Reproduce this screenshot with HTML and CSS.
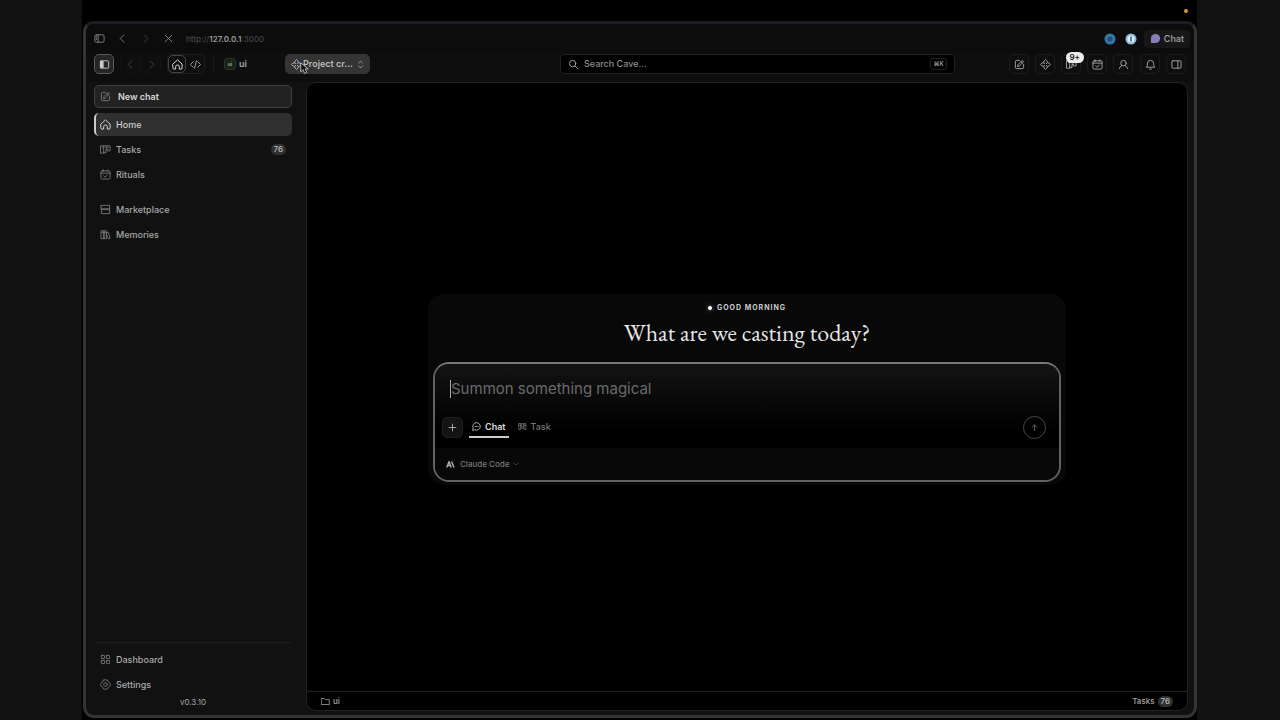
FILE: index.html
```
<!DOCTYPE html>
<html lang="en">
  <head>
    <title>Cave</title>
    <meta charset="UTF-8" />
    <meta name="viewport" content="width=device-width, initial-scale=1" />
    <link rel="stylesheet" href="styles.css">
  </head>
  <body>
    <!-- shared icons -->
    <svg class="defs" aria-hidden="true">
      <symbol id="panel-left" viewBox="0 0 24 24"><rect x="2" y="4" width="20" height="16" rx="3" /><path d="M9 4v16M5 8h1M5 11h1M5 14h1" /></symbol>
      <symbol id="panel-fill" viewBox="0 0 24 24"><rect x="3" y="4" width="18" height="16" rx="2" /><path d="M4 5h5v14H4z" fill="currentColor" /></symbol>
      <symbol id="panel-right" viewBox="0 0 24 24"><rect x="2" y="4" width="20" height="16" rx="2" /><path d="M15 4v16" /></symbol>
      <symbol id="left" viewBox="0 0 24 24"><path d="M15 4l-8 8 8 8" /></symbol>
      <symbol id="right" viewBox="0 0 24 24"><path d="M9 4l8 8-8 8" /></symbol>
      <symbol id="down" viewBox="0 0 24 24"><path d="M3 8l9 8 9-8" /></symbol>
      <symbol id="updown" viewBox="0 0 24 24"><path d="M7 8l5-5 5 5M7 16l5 5 5-5" /></symbol>
      <symbol id="close" viewBox="0 0 24 24"><path d="M5 5l14 14M19 5L5 19" /></symbol>
      <symbol id="home" viewBox="0 0 24 24"><path d="M2 11L12 2l10 9v9a2 2 0 0 1-2 2h-4v-5a4 4 0 0 0-8 0v5H4a2 2 0 0 1-2-2z" /></symbol>
      <symbol id="code" viewBox="0 0 24 24"><path d="M7 6l-6 6 6 6M17 6l6 6-6 6M14 4l-4 16" /></symbol>
      <symbol id="edit" viewBox="0 0 24 24"><path d="M12 3H6a3 3 0 0 0-3 3v12a3 3 0 0 0 3 3h12a3 3 0 0 0 3-3v-6" /><path d="M8 16l1-4 9-9 3 3-9 9zM15 6l3 3" /></symbol>
      <symbol id="sparkle" viewBox="0 0 24 24"><path d="M8 8l1-4 3-3 3 3 1 4 4 1 3 3-3 3-4 1-1 4-3 3-3-3-1-4-4-1-3-3 3-3zM8 8l2 2M16 8l-2 2M8 16l2-2M16 16l-2-2" /></symbol>
      <symbol id="board" viewBox="0 0 24 24"><path d="M2 4h20v11h-6v-3h-3v7H9v-2H8v3H2zM8 4v13M15 4v8M5 8h1M11 8h1M18 8h1" /></symbol>
      <symbol id="calendar" viewBox="0 0 24 24"><rect x="2" y="4" width="20" height="18" rx="3" /><path d="M2 9h20M7 2v3M17 2v3M8 15l3 3 5-5" /></symbol>
      <symbol id="store" viewBox="0 0 24 24"><path d="M3 3h18v8H3zM3 9c0 5 6 5 6 0 0 5 6 5 6 0 0 5 6 5 6 0M3 12v9h18v-9" /></symbol>
      <symbol id="books" viewBox="0 0 24 24"><path d="M3 4h6v17H3zM9 4h5v17H9zM14 8l4-1 4 13-4 1-4-9M3 8h6M9 8h5" /></symbol>
      <symbol id="grid" viewBox="0 0 24 24"><rect x="3" y="3" width="7" height="7" rx="1" /><rect x="14" y="3" width="7" height="7" rx="1" /><rect x="3" y="14" width="7" height="7" rx="1" /><rect x="14" y="14" width="7" height="7" rx="1" /></symbol>
      <symbol id="gear" viewBox="0 0 24 24"><path d="M8 2h8l2 4 3 2 2 4-2 4-3 2-2 4H8l-2-4-3-2-2-4 2-4 3-2z" /><circle cx="12" cy="12" r="4" /></symbol>
      <symbol id="user" viewBox="0 0 24 24"><circle cx="12" cy="9" r="6" /><path d="M3 21c1-4 3-5 5-6M21 21c-1-4-3-5-5-6" /></symbol>
      <symbol id="bell" viewBox="0 0 24 24"><path d="M5 10a7 7 0 0 1 14 0v4l2 4H3l2-4zM10 22h4" /></symbol>
      <symbol id="search" viewBox="0 0 24 24"><circle cx="10" cy="10" r="7" /><path d="M15 15l6 6" /></symbol>
      <symbol id="folder" viewBox="0 0 24 24"><path d="M2 4h7l3 3h10v13H2z" /></symbol>
      <symbol id="plus" viewBox="0 0 24 24"><path d="M12 3v18M3 12h18" /></symbol>
      <symbol id="up" viewBox="0 0 24 24"><path d="M12 20V5M6 11l6-6 6 6" /></symbol>
      <symbol id="bubble" viewBox="0 0 24 24"><path d="M2 22l1-6a10 10 0 1 1 5 5zM8 12h1M12 12h1M16 12h1" /></symbol>
      <symbol id="columns" viewBox="0 0 24 24"><path d="M3 4h4v16H3zM10 4h4v10h-4zM17 4h4v16h-4zM10 17h4M3 9h4M17 9h4" /></symbol>
    </svg>

    <div class="menubar"><span class="rec"></span></div>
    <div class="window">
      <header class="browser">
        <button class="plain" aria-label="Tabs"><svg class="icon"><use href="#panel-left" /></svg></button>
        <button class="plain" aria-label="Back"><svg class="icon"><use href="#left" /></svg></button>
        <button class="plain dim" aria-label="Forward"><svg class="icon"><use href="#right" /></svg></button>
        <button class="plain" aria-label="Stop"><svg class="icon"><use href="#close" /></svg></button>
        <span class="url">http://<b>127.0.0.1</b>:3000</span>
        <div class="exts">
          <svg class="ext" viewBox="0 0 12 12"><circle cx="6" cy="6" r="5.500" fill="#2f79a8" /><circle cx="6" cy="6" r="2.500" fill="#254f6b" /></svg>
          <svg class="ext" viewBox="0 0 12 12"><circle cx="6" cy="6" r="5.500" fill="#8fbbdc" /><circle cx="6" cy="6" r="3.500" fill="#e2edf5" /><path d="M6 3.500v5" stroke="#2c628e" stroke-width="1.500" /></svg>
          <button class="chat-ext"><svg viewBox="0 0 12 12"><path d="M1 11V6a5 5 0 1 1 5 5z" fill="#8a7cb4" /></svg>Chat</button>
        </div>
      </header>

      <nav class="toolbar" aria-label="Toolbar">
        <button class="tool toggle" aria-label="Sidebar"><svg class="icon"><use href="#panel-fill" /></svg></button>
        <div class="history">
          <button class="tool faint" aria-label="Back"><svg class="icon"><use href="#left" /></svg></button>
          <button class="tool faint" aria-label="Forward"><svg class="icon"><use href="#right" /></svg></button>
        </div>
        <div class="modes">
          <button class="mode on" aria-label="Home"><svg class="icon"><use href="#home" /></svg></button>
          <button class="mode" aria-label="Code"><svg class="icon"><use href="#code" /></svg></button>
        </div>
        <button class="workspace"><span class="avatar">ui</span>ui</button>
        <button class="project">
          <svg class="icon"><use href="#sparkle" /></svg><span>Project cr...</span><svg class="icon small"><use href="#updown" /></svg>
          <svg class="pointer" viewBox="0 0 12 17"><path d="M1 1v12l3-3 2 5 3-1-2-5h4z" fill="#111" stroke="#ddd" /></svg>
        </button>
        <label class="search">
          <svg class="icon"><use href="#search" /></svg>
          <input type="text" placeholder="Search Cave..." aria-label="Search Cave" />
          <kbd>⌘K</kbd>
        </label>
        <div class="actions">
          <button class="tool" aria-label="New chat"><svg class="icon"><use href="#edit" /></svg></button>
          <button class="tool" aria-label="Projects"><svg class="icon"><use href="#sparkle" /></svg></button>
          <button class="tool" aria-label="Tasks"><svg class="icon"><use href="#board" /></svg><span class="badge">9+</span></button>
          <button class="tool" aria-label="Calendar"><svg class="icon"><use href="#calendar" /></svg></button>
          <button class="tool" aria-label="Account"><svg class="icon"><use href="#user" /></svg></button>
        </div>
        <div class="actions last">
          <button class="tool" aria-label="Notifications"><svg class="icon"><use href="#bell" /></svg></button>
          <button class="tool" aria-label="Panel"><svg class="icon"><use href="#panel-right" /></svg></button>
        </div>
      </nav>

      <div class="content">
        <aside class="sidebar">
          <button class="new-chat"><svg class="icon"><use href="#edit" /></svg>New chat</button>
          <nav class="links">
            <a class="link active" href="#"><svg class="icon"><use href="#home" /></svg>Home</a>
            <a class="link" href="#"><svg class="icon"><use href="#board" /></svg>Tasks<span class="count">76</span></a>
            <a class="link" href="#"><svg class="icon"><use href="#calendar" /></svg>Rituals</a>
          </nav>
          <nav class="links">
            <a class="link" href="#"><svg class="icon"><use href="#store" /></svg>Marketplace</a>
            <a class="link" href="#"><svg class="icon"><use href="#books" /></svg>Memories</a>
          </nav>
          <nav class="links bottom">
            <a class="link" href="#"><svg class="icon"><use href="#grid" /></svg>Dashboard</a>
            <a class="link" href="#"><svg class="icon"><use href="#gear" /></svg>Settings</a>
          </nav>
          <div class="version">v0.3.10</div>
        </aside>

        <main class="panel">
          <div class="stage">
            <section class="hero">
              <p class="greeting"><span class="dot"></span>GOOD MORNING</p>
              <h1>What are we casting today?</h1>
              <form class="composer">
                <div class="compose">
                  <div class="prompt">
                    <span class="caret"></span>
                    <input type="text" placeholder="Summon something magical" aria-label="Message" />
                  </div>
                  <div class="controls">
                    <button type="button" class="add" aria-label="Add"><svg class="icon small"><use href="#plus" /></svg></button>
                    <button type="button" class="tab on"><svg class="icon small"><use href="#bubble" /></svg>Chat</button>
                    <button type="button" class="tab"><svg class="icon small"><use href="#columns" /></svg>Task</button>
                    <button type="button" class="send" aria-label="Send"><svg class="icon small"><use href="#up" /></svg></button>
                  </div>
                </div>
                <div class="engine">
                  <button type="button" class="model">
                    <svg class="mark" viewBox="0 0 20 14"><path d="M1.500 13L6 1.500 10.500 13M3.500 9h5M11 1l5 12" /></svg>Claude Code<svg class="icon tiny"><use href="#down" /></svg>
                  </button>
                </div>
              </form>
            </section>
          </div>
          <footer class="status">
            <span class="folder"><svg class="icon small"><use href="#folder" /></svg>ui</span>
            <span class="folder">Tasks<span class="count">76</span></span>
          </footer>
        </main>
      </div>
    </div>
  </body>
</html>
```

FILE: styles.css
```
* {
  box-sizing: border-box;
}
body {
  margin: 0;
  height: 100vh;
  padding: 0 83px 2px;
  display: flex;
  flex-direction: column;
  background: linear-gradient(to right, #111 82px, #000 82px, #000 calc(100% - 83px), #111 calc(100% - 83px));
  color: #a8a8a8;
  font: 500 9px/14px Inter, "Liberation Sans", sans-serif;
}
button,
input {
  font: inherit;
  color: inherit;
  background: none;
  border: 0;
  padding: 0;
  margin: 0;
}
input {
  outline: none;
  min-width: 0;
}
button {
  display: flex;
  align-items: center;
}
a {
  color: inherit;
  text-decoration: none;
}
.defs {
  position: absolute;
  width: 0;
  height: 0;
}
.icon {
  width: 11px;
  height: 11px;
  flex: none;
  fill: none;
  stroke: currentColor;
  stroke-width: 2;
  stroke-linecap: round;
  stroke-linejoin: round;
}
.small {
  width: 9px;
  height: 9px;
}
.tiny {
  width: 6px;
  height: 6px;
}

/* top strip */
.menubar {
  height: 21px;
  flex: none;
  display: flex;
  justify-content: flex-end;
  align-items: center;
  padding-right: 9px;
}
.rec {
  width: 4px;
  height: 4px;
  border-radius: 50%;
  background: #d9943c;
}
.window {
  flex: 1;
  min-height: 0;
  display: flex;
  flex-direction: column;
  border: 3px solid #343437;
  border-top-color: #1e1d27;
  border-radius: 11px;
  background: #111;
}

/* browser bar */
.browser {
  height: 29px;
  flex: none;
  display: flex;
  align-items: center;
  gap: 12px;
  padding: 0 4px 0 8px;
  background: #0c0c0d;
  border-radius: 8px 8px 0 0;
}
.plain {
  width: 11px;
  height: 20px;
  color: #858585;
}
.dim {
  color: #444;
}
.url {
  font-size: 8px;
  color: #444;
}
.url b {
  font-weight: 600;
  color: #999;
}
.exts {
  margin-left: auto;
  display: flex;
  align-items: center;
  gap: 9px;
}
.ext {
  width: 12px;
  height: 12px;
}
.chat-ext {
  height: 18px;
  gap: 3px;
  padding: 0 6px;
  margin-left: -2px;
  border-radius: 4px;
  background: #171717;
}
.chat-ext svg {
  width: 11px;
  height: 11px;
}

/* toolbar */
.toolbar {
  height: 29px;
  flex: none;
  display: flex;
  align-items: center;
  padding: 0 8px 7px;
  background: #0e0e0f;
}
.tool {
  position: relative;
  width: 20px;
  height: 20px;
  justify-content: center;
  border: 1px solid #1c1c1c;
  border-radius: 5px;
}
.toggle {
  border-color: #585858;
  background: #262626;
  color: #ccc;
}
.history {
  display: flex;
  gap: 1px;
  margin-left: 6px;
}
.faint {
  border-color: #131313;
  color: #484848;
}
.modes {
  display: flex;
  height: 20px;
  margin-left: 6px;
  border: 1px solid #1e1e1e;
  border-radius: 5px;
}
.mode {
  width: 18px;
  justify-content: center;
}
.mode.on {
  border: 1px solid #444;
  border-radius: 5px;
  color: #eee;
}
.workspace {
  height: 20px;
  width: 72px;
  gap: 3px;
  margin-left: 8px;
  padding-left: 10px;
  border-left: 1px solid #1a1a1a;
  font-weight: 600;
}
.avatar {
  width: 12px;
  height: 12px;
  border: 1px solid #1e3a20;
  border-radius: 3px;
  background: #192019;
  font-size: 5px;
  line-height: 10px;
  text-align: center;
}
.project {
  position: relative;
  width: 85px;
  height: 20px;
  gap: 1px;
  padding: 0 5px 0 6px;
  border-radius: 5px;
  background: #343434;
  color: #bbb;
  font-weight: 600;
}
.project span {
  flex: 1;
  text-align: left;
  white-space: nowrap;
}
.pointer {
  position: absolute;
  left: 15px;
  top: 8px;
  width: 9px;
  height: 13px;
}
.search {
  width: 395px;
  height: 20px;
  margin: 0 54px 0 auto;
  display: flex;
  align-items: center;
  gap: 5px;
  padding: 0 7px;
  border: 1px solid #232323;
  border-radius: 5px;
  background: #000;
}
.search input {
  flex: 1;
}
.search input::placeholder {
  color: #8c8c8c;
  opacity: 1;
}
kbd {
  width: 17px;
  height: 12px;
  border: 1px solid #232323;
  border-radius: 3px;
  font: 500 6px/10px Inter, "DejaVu Sans", sans-serif;
  text-align: center;
}
.actions {
  display: flex;
  gap: 6px;
}
.last {
  margin-left: 7px;
}
.badge {
  position: absolute;
  right: -4px;
  top: -3px;
  padding: 0 4px;
  border-radius: 6px;
  background: #eee;
  color: #111;
  font-size: 8px;
  font-weight: 600;
  line-height: 11px;
}

/* sidebar */
.content {
  flex: 1;
  min-height: 0;
  display: flex;
  padding: 0 6px 4px 8px;
}
.sidebar {
  width: 198px;
  flex: none;
  margin-right: 14px;
  padding: 3px 0;
  display: flex;
  flex-direction: column;
}
.new-chat {
  height: 23px;
  gap: 7px;
  padding: 0 5px;
  margin-bottom: 5px;
  border: 1px solid #404040;
  border-radius: 5px;
  background: #222;
  color: #d8d8d8;
  font-weight: 600;
}
.new-chat .icon,
.link .icon {
  color: #777;
}
.links {
  display: flex;
  flex-direction: column;
  gap: 2px;
  margin-bottom: 12px;
}
.link {
  height: 23px;
  display: flex;
  align-items: center;
  gap: 5px;
  padding: 0 6px 0 4px;
  border-left: 2px solid transparent;
  border-radius: 5px;
}
.link.active {
  border-left-color: #ccc;
  background: #303030;
  color: #ccc;
}
.link.active .icon {
  color: #ddd;
}
.count {
  padding: 0 3px;
  border-radius: 6px;
  background: #303030;
  color: #bbb;
  font-size: 8px;
  line-height: 11px;
}
.link .count {
  margin-left: auto;
}
.bottom {
  margin: auto 0 0;
  padding-top: 5px;
  border-top: 1px solid #1d1d1d;
}
.version {
  text-align: center;
  font-size: 8px;
  font-weight: 400;
  line-height: 12px;
}

/* main panel */
.panel {
  flex: 1;
  min-width: 0;
  display: flex;
  flex-direction: column;
  border: 1px solid #222;
  border-radius: 10px;
  background: #000;
}
.stage {
  flex: 1;
  display: flex;
  align-items: center;
  justify-content: center;
  padding-top: 5px;
}
.hero {
  width: 638px;
  max-width: 100%;
  padding: 7px 5px 3px;
  border-radius: 16px;
  background: #080808;
  text-align: center;
}
.greeting {
  display: flex;
  align-items: center;
  justify-content: center;
  gap: 5px;
  margin: 0;
  font-size: 7px;
  font-weight: 700;
  letter-spacing: 1px;
  color: #ccc;
}
.dot {
  width: 4px;
  height: 4px;
  border-radius: 50%;
  background: #fff;
  box-shadow: 0 0 4px #888;
}
h1 {
  margin: 2px 0 13px;
  font: 24px/32px "EB Garamond", "Liberation Serif", serif;
  color: #e6e6e6;
}
.composer {
  border: 2px solid #626262;
  border-top-color: #777;
  border-radius: 16px;
  overflow: hidden;
}
.compose {
  padding: 12px 13px 9px 7px;
  background: linear-gradient(#131313, #000 80%);
}
.prompt {
  display: flex;
  align-items: center;
  height: 26px;
  padding-left: 8px;
}
.caret {
  width: 1px;
  height: 18px;
  background: #aaa;
}
.prompt input {
  flex: 1;
  font-size: 15px;
  font-weight: 400;
  line-height: 24px;
}
.prompt input::placeholder {
  color: #6a6a6a;
  opacity: 1;
}
.controls {
  display: flex;
  align-items: center;
  padding-top: 14px;
}
.add {
  width: 21px;
  height: 21px;
  justify-content: center;
  border: 1px solid #1f1f1f;
  border-radius: 5px;
  background: #141414;
  color: #ccc;
}
.tab {
  height: 20px;
  gap: 4px;
  margin-left: 6px;
  padding: 0 3px;
  border-bottom: 2px solid transparent;
  color: #777;
}
.tab.on {
  border-bottom-color: #ccc;
  color: #ddd;
  font-weight: 600;
}
.send {
  width: 23px;
  height: 23px;
  margin-left: auto;
  justify-content: center;
  border: 1px solid #484848;
  border-radius: 50%;
  color: #777;
}
.engine {
  height: 32px;
  display: flex;
  align-items: center;
  padding: 0 11px;
  background: #080808;
}
.model {
  gap: 4px;
  font-size: 8px;
  color: #777;
}
.mark {
  width: 10px;
  height: 7px;
  fill: none;
  stroke: #aaa;
  stroke-width: 3;
}
.status {
  height: 19px;
  flex: none;
  display: flex;
  align-items: center;
  justify-content: space-between;
  padding: 0 14px;
  border-top: 1px solid #222;
}
.folder {
  display: flex;
  align-items: center;
  gap: 3px;
  font-size: 8px;
}
```
